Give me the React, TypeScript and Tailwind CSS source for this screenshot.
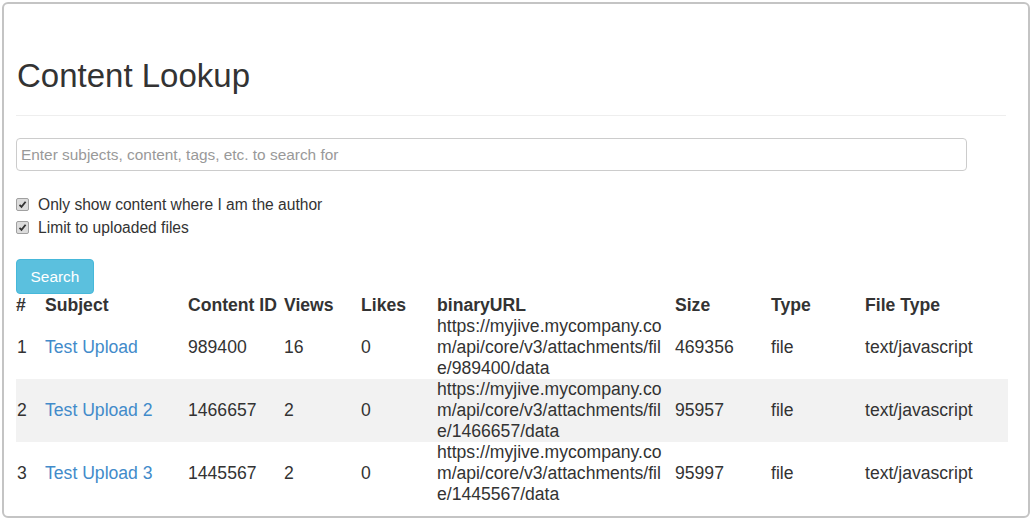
const rows = [
  { n: 1, subject: "Test Upload", id: "989400", views: "16", likes: "0", url: "https://myjive.mycompany.com/api/core/v3/attachments/file/989400/data", size: "469356", type: "file", fileType: "text/javascript" },
  { n: 2, subject: "Test Upload 2", id: "1466657", views: "2", likes: "0", url: "https://myjive.mycompany.com/api/core/v3/attachments/file/1466657/data", size: "95957", type: "file", fileType: "text/javascript" },
  { n: 3, subject: "Test Upload 3", id: "1445567", views: "2", likes: "0", url: "https://myjive.mycompany.com/api/core/v3/attachments/file/1445567/data", size: "95997", type: "file", fileType: "text/javascript" },
];

const CheckBox = () => (
  <span className="w-[13px] h-[13px] rounded-[2px] border border-[#a0a0a0] bg-[#dcdcdc] flex items-center justify-center shrink-0">
    <svg width="9" height="9" viewBox="0 0 9 9">
      <path d="M1.5 4.8 L3.5 6.8 L7.6 1.8" fill="none" stroke="#333" strokeWidth="1.8" />
    </svg>
  </span>
);

const Check = ({ label }: { label: string }) => (
  <label className="flex items-center gap-[9px] h-[23px]">
    <CheckBox />
    <span>{label}</span>
  </label>
);

export default function App() {
  return (
    <div className="w-[1032px] h-[521px] bg-white p-[2px] font-['Liberation_Sans',Arial,sans-serif] text-[#333]">
      <div className="h-[516px] border-2 border-[#c4c4c4] rounded-[6px] px-[12px] overflow-hidden">
        <h1 className="text-[33px] leading-[40px] pt-[52px] pb-[19px] pl-[1px] border-b border-[#eee] mr-[10px]">Content Lookup</h1>
        <div className="pt-[22px]">
          <input
            className="w-[951px] h-[33px] border border-[#ccc] rounded-[4px] px-[4px] text-[15.4px] placeholder:text-[#999] outline-none"
            placeholder="Enter subjects, content, tags, etc. to search for"
          />
        </div>
        <div className="pt-[22px] text-[15.6px] leading-[20px]">
          <Check label="Only show content where I am the author" />
          <Check label="Limit to uploaded files" />
        </div>
        <button className="mt-[20px] w-[78px] h-[35px] rounded-[4px] bg-[#5bc0de] border border-[#46b8da] text-white text-[15.4px]">Search</button>
        <table className="w-[992px] table-fixed border-collapse text-[17.6px] leading-[21px]">
          <colgroup>
            <col className="w-[29px]" />
            <col className="w-[143px]" />
            <col className="w-[96px]" />
            <col className="w-[77px]" />
            <col className="w-[76px]" />
            <col className="w-[238px]" />
            <col className="w-[96px]" />
            <col className="w-[94px]" />
            <col className="w-[143px]" />
          </colgroup>
          <thead>
            <tr className="h-[22px] text-left font-bold">
              {["#", "Subject", "Content ID", "Views", "Likes", "binaryURL", "Size", "Type", "File Type"].map((h) => (
                <th key={h} className="whitespace-nowrap font-bold">{h}</th>
              ))}
            </tr>
          </thead>
          <tbody>
            {rows.map((r) => (
              <tr key={r.n} className={r.n % 2 === 0 ? "bg-[#f2f2f2]" : ""}>
                <td className="pl-[1px] align-middle">{r.n}</td>
                <td className="align-middle">
                  <a className="text-[#428bca]" href="#">{r.subject}</a>
                </td>
                <td className="align-middle">{r.id}</td>
                <td className="align-middle">{r.views}</td>
                <td className="align-middle">{r.likes}</td>
                <td className="pr-[6px] align-middle break-all">{r.url}</td>
                <td className="align-middle">{r.size}</td>
                <td className="align-middle">{r.type}</td>
                <td className="align-middle">{r.fileType}</td>
              </tr>
            ))}
          </tbody>
        </table>
      </div>
    </div>
  );
}
